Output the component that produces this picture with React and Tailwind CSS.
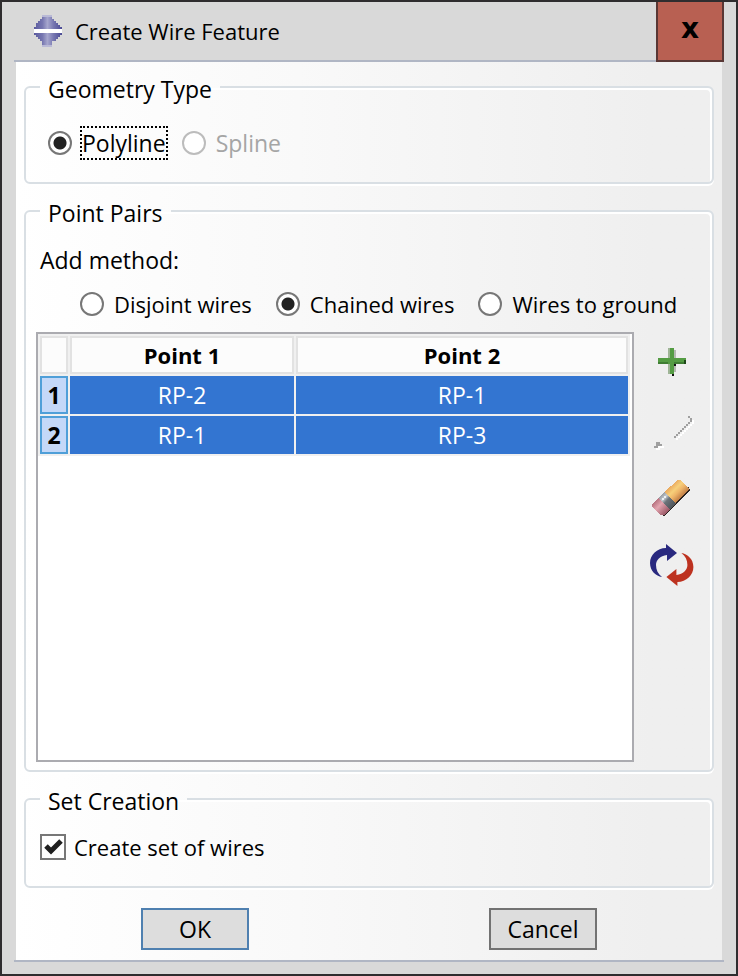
import { useState } from "react";

const radioClass =
  "size-6 shrink-0 appearance-none rounded-full border-2 border-[#777] bg-white checked:bg-[radial-gradient(circle,#222_6px,#fff_7px)] disabled:border-[#bcbcbc]";

function Group({ title, className, children }) {
  return (
    <fieldset
      className={`min-w-0 rounded-md border-2 border-[#d9dfe4] shadow-[0_2px_0_#fff,inset_-2px_2px_0_#fff] ${className}`}
    >
      <legend className="ml-3.5 px-2 pt-1 leading-[30px]">{title}</legend>
      {children}
    </fieldset>
  );
}

function AppLogo() {
  return (
    <svg width="28" height="32" viewBox="0 0 28 32" shapeRendering="crispEdges" aria-hidden="true">
      <defs>
        <linearGradient id="logo" x1="0" x2="1" y1="0" y2="0">
          <stop offset="0" stopColor="#5a5a9e" />
          <stop offset="0.3" stopColor="#7676b0" />
          <stop offset="0.48" stopColor="#a6a6cd" />
          <stop offset="0.7" stopColor="#7676b0" />
          <stop offset="1" stopColor="#4a4a94" />
        </linearGradient>
      </defs>
      <path
        fill="url(#logo)"
        d="M8 0H18V4H20V6H22V8H24V10H26V12H28V20H26V22H24V24H22V26H18V32H8V26H6V24H4V22H2V20H0V12H2V8H4V6H6V4H8Z"
      />
      <path fill="#b9b9d6" d="M8 0H18V2H8ZM8 30H18V32H8Z" />
      <rect x="0" y="14" width="28" height="4" fill="#fff" />
    </svg>
  );
}

function PlusIcon() {
  return (
    <svg width="44" height="44" viewBox="0 0 44 44" shapeRendering="crispEdges" aria-hidden="true">
      <path fill="#b4b9b1" d="M24 10h2v8h-2zM24 24h2v8h-2z" />
      <path fill="#111" d="M24 24h2v2h-2zM22 34h2v2h-2z" />
      <path fill="#549c43" d="M20 8h4v26h-4zM8 18h28v6H8z" />
      <path fill="#9fb596" d="M18 8h2v10h-2zM18 24h2v10h-2z" />
      <path fill="#3f7d33" d="M8 22h10v2H8zM24 22h10v2h-10z" />
      <path fill="#1f4a19" d="M34 20h2v4h-2z" />
    </svg>
  );
}

function WireIcon() {
  const shape =
    "M24 28h2v2h-2zM26 26h2v2h-2zM28 24h2v2h-2zM30 22h2v2h-2zM32 20h2v2h-2zM34 18h2v2h-2zM36 16h2v2h-2zM38 14h2v2h-2zM40 10h2v4h-2zM38 8h2v2h-2zM6 34h4v2h-4zM6 36h6v2h-6zM4 38h4v2h-4z";
  return (
    <svg width="44" height="44" viewBox="0 0 44 44" shapeRendering="crispEdges" aria-hidden="true">
      <path fill="#fff" d={shape} transform="translate(2 2)" />
      <path fill="#a0a0a0" d={shape} />
    </svg>
  );
}

function EraserIcon() {
  return (
    <svg width="44" height="44" viewBox="0 0 44 44" shapeRendering="crispEdges" aria-hidden="true">
      <defs>
        <linearGradient id="rubber" gradientUnits="userSpaceOnUse" x1="20" y1="10" x2="32" y2="22">
          <stop offset="0" stopColor="#e9a65c" />
          <stop offset="0.35" stopColor="#f7d07a" />
          <stop offset="0.6" stopColor="#eeb468" />
          <stop offset="1" stopColor="#b8743f" />
        </linearGradient>
        <linearGradient id="metal" gradientUnits="userSpaceOnUse" x1="11" y1="18" x2="24" y2="30">
          <stop offset="0" stopColor="#8b9198" />
          <stop offset="0.3" stopColor="#c5ccd2" />
          <stop offset="0.5" stopColor="#6d747a" />
          <stop offset="1" stopColor="#4d5358" />
        </linearGradient>
        <linearGradient id="tip" gradientUnits="userSpaceOnUse" x1="5" y1="25" x2="17" y2="36">
          <stop offset="0" stopColor="#b5707e" />
          <stop offset="0.4" stopColor="#e3a5b0" />
          <stop offset="1" stopColor="#9c5a68" />
        </linearGradient>
      </defs>
      <path fill="#2b2320" d="M38 10l2 4-26 26-2-1z" />
      <path fill="url(#rubber)" d="M14 16L28 4l2 0 9 9-13 14z" />
      <path fill="url(#metal)" d="M8 22l6-6 12 11-6 6z" />
      <path fill="url(#tip)" d="M2 28l6-6 12 11-6 6h-3l-9-8z" />
      <path fill="#eef2f5" d="M14 20h2v2h-2zM12 22h2v2h-2z" />
    </svg>
  );
}

function SwapIcon() {
  const arrow =
    "M12 33C6 32 0 27 0 19C0 11 7 4 16 4V0L27 9L17 17V11C10 12 6 16 6 21C6 26 8 30 12 33Z";
  return (
    <svg width="44" height="44" viewBox="0 0 44 44" aria-hidden="true">
      <path fill="#29297f" d={arrow} />
      <path fill="#bd3220" d={arrow} transform="rotate(180 21.7 21)" />
    </svg>
  );
}

function Method({ value, label, method, onChange }) {
  return (
    <label className="flex items-center gap-2.5 whitespace-nowrap">
      <input
        type="radio"
        name="method"
        className={radioClass}
        checked={method === value}
        onChange={() => onChange(value)}
      />
      {label}
    </label>
  );
}

const pairs = [
  ["RP-2", "RP-1"],
  ["RP-1", "RP-3"],
];

export default function App() {
  const [method, setMethod] = useState("chained");
  return (
    <div className="flex min-h-screen flex-col border-2 border-[#2f2d2f] bg-[#d9d9d9] px-3 pb-3 font-['Open_Sans','Noto_Sans',sans-serif] text-[23px] leading-8 text-black">
      <header className="flex h-[58px] items-center gap-[13px] pl-5">
        <AppLogo />
        <h1 className="flex-1 text-[22px]">Create Wire Feature</h1>
        <button
          aria-label="Close"
          className="z-10 h-[60px] w-[68px] self-start border-2 border-t-0 border-[#593735] bg-[#b86052] pb-1 font-['DejaVu_Sans',sans-serif] text-[28px] font-bold"
        >
          x
        </button>
      </header>

      <main className="flex flex-1 flex-col border-y-2 border-[#b0b6c4]">
        <div className="mx-0.5 flex flex-1 flex-col gap-2.5 bg-linear-to-r from-white via-[#f9f9f9] via-40% to-[#efefef] to-90% px-2 pt-2 pb-2.5">
          <Group title="Geometry Type" className="pb-[22px]">
            <div className="flex gap-3.5 pt-[22px] pl-[22px]">
              <label className="flex items-center gap-2">
                <input type="radio" name="geometry" className={radioClass} defaultChecked />
                <span className="border-2 border-dotted border-black leading-[30px]">Polyline</span>
              </label>
              <label className="flex items-center gap-2.5 text-[#a5a5a5]">
                <input type="radio" name="geometry" className={radioClass} disabled />
                <span>Spline</span>
              </label>
            </div>
          </Group>

          <Group title="Point Pairs" className="pb-2">
            <p className="px-3.5 pt-4">Add method:</p>
            <div className="flex gap-6 pt-3 pb-3 pl-[54px] text-[22px]">
              <Method value="disjoint" label="Disjoint wires" method={method} onChange={setMethod} />
              <Method value="chained" label="Chained wires" method={method} onChange={setMethod} />
              <Method value="ground" label="Wires to ground" method={method} onChange={setMethod} />
            </div>
            <div className="flex gap-4 pr-[18px] pl-2.5">
              <div className="min-h-[430px] flex-1 border-2 border-[#ababb0] bg-white pr-0.5">
                <table className="w-full table-fixed border-separate border-spacing-0.5 bg-[#f0f0f0] text-center leading-[34px]">
                  <colgroup>
                    <col className="w-7" />
                    <col className="w-56" />
                    <col />
                  </colgroup>
                  <thead>
                    <tr className="bg-[#fcfcfc] text-[22px]">
                      <td className="border-2 border-[#e2e2e2]" />
                      <th className="border-2 border-[#e2e2e2] p-0 font-bold">Point 1</th>
                      <th className="border-2 border-[#e2e2e2] p-0 font-bold">Point 2</th>
                    </tr>
                  </thead>
                  <tbody>
                    {pairs.map(([a, b], i) => (
                      <tr key={i} className="bg-[#3375d1] text-white">
                        <th className="border-2 border-[#4f9fd8] bg-[#c4d8f8] p-0 font-bold text-black">
                          {i + 1}
                        </th>
                        <td className="p-0">{a}</td>
                        <td className="p-0">{b}</td>
                      </tr>
                    ))}
                  </tbody>
                </table>
              </div>
              <div className="flex flex-col gap-6 pt-2">
                <button aria-label="Add point pair"><PlusIcon /></button>
                <button aria-label="Edit wire" disabled><WireIcon /></button>
                <button aria-label="Delete point pair"><EraserIcon /></button>
                <button aria-label="Swap points"><SwapIcon /></button>
              </div>
            </div>
          </Group>

          <Group title="Set Creation" className="pb-[23px]">
            <label className="flex items-center gap-2 px-3.5 pt-[15px] text-[22px]">
              <span className="grid size-[26px] place-items-center">
                <input
                  type="checkbox"
                  defaultChecked
                  className="peer col-start-1 row-start-1 size-[26px] appearance-none border-2 border-[#777] bg-white"
                />
                <svg
                  className="pointer-events-none invisible col-start-1 row-start-1 peer-checked:visible"
                  width="20"
                  height="20"
                  viewBox="0 0 20 20"
                  fill="none"
                  stroke="#1f1f1f"
                  strokeWidth="5"
                  aria-hidden="true"
                >
                  <path d="M3 9l5 5L18 4" />
                </svg>
              </span>
              Create set of wires
            </label>
          </Group>

          <div className="flex justify-center gap-60 pt-2.5">
            <button className="h-[42px] w-27 border-2 border-[#4f80b0] bg-[#ddd]">OK</button>
            <button className="h-[42px] w-27 border-2 border-[#727272] bg-[#ddd]">Cancel</button>
          </div>
        </div>
      </main>
    </div>
  );
}
